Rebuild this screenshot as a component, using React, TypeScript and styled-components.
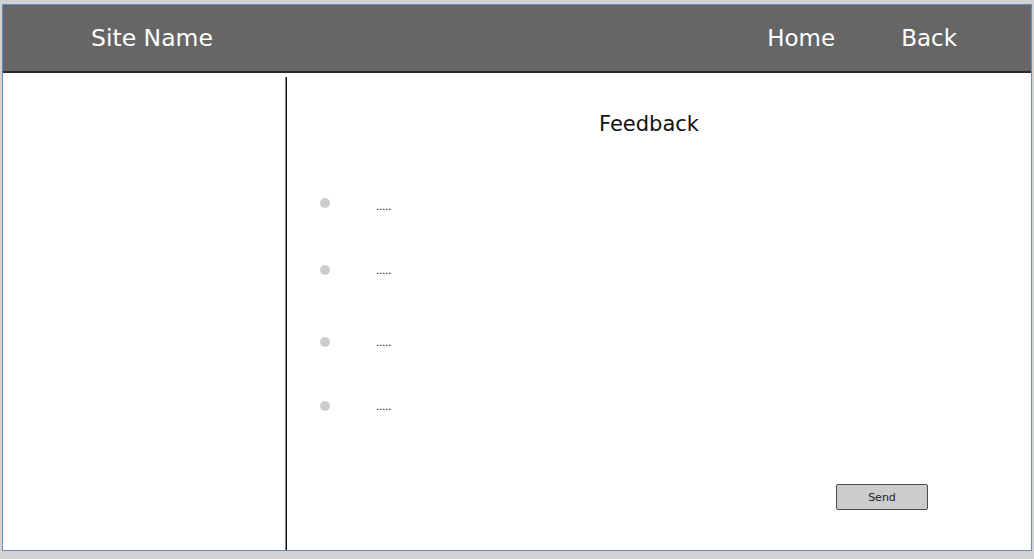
import React from "react";
import styled, { createGlobalStyle } from "styled-components";

const Global = createGlobalStyle`
  html, body { margin: 0; padding: 0; }
  body {
    background: #d2d2d2;
    font-family: "Comic Sans MS", "DejaVu Sans", sans-serif;
    width: 1034px;
    height: 559px;
    overflow: hidden;
  }
`;

const Frame = styled.div`
  margin: 4px 0 0 2px;
  width: 1030px;
  height: 547px;
  box-sizing: border-box;
  border: 1px solid #5f8fc6;
  background: #ffffff;
  display: flex;
  flex-direction: column;
`;

const Header = styled.header`
  height: 66px;
  flex: none;
  background: #666666;
  border-bottom: 2px solid #2a2a2a;
  display: flex;
  align-items: center;
  padding: 0 74px 0 88px;
  color: #ffffff;
`;

const SiteName = styled.div`
  font-size: 23.5px;
  flex: 1;
`;

const NavLink = styled.a<{ $gap: number }>`
  font-size: 23px;
  color: #ffffff;
  text-decoration: none;
  margin-left: ${(p) => p.$gap}px;
`;

const Body = styled.div`
  flex: 1;
  display: flex;
  min-height: 0;
`;

const Sidebar = styled.aside`
  width: 282px;
  flex: none;
`;

const Divider = styled.div`
  width: 1px;
  margin-top: 4px;
  flex: none;
  background: #111;
  border-left: 1px solid #888;
`;

const Main = styled.main`
  flex: 1;
  display: flex;
  flex-direction: column;
  padding: 37px 103px 40px 33px;
`;

const Title = styled.h1`
  margin: 1px 0 0 50px;
  font-weight: normal;
  font-size: 21px;
  line-height: 26px;
  text-align: center;
  color: #111;
`;

const Row = styled.div<{ $top: number }>`
  display: flex;
  align-items: center;
  height: 20px;
  margin-top: ${(p) => p.$top}px;
`;

const Bullet = styled.span`
  width: 10px;
  height: 10px;
  border-radius: 50%;
  background: #cccccc;
  flex: none;
`;

const ItemText = styled.span<{ $drop: number }>`
  margin-left: 46px;
  padding-top: ${(p) => p.$drop}px;
  font-size: 11px;
  color: #222;
  letter-spacing: -0.5px;
`;

const Footer = styled.div`
  margin-top: auto;
  display: flex;
  justify-content: flex-end;
`;

const SendButton = styled.button`
  width: 92px;
  height: 26px;
  background: #cccccc;
  border: 1px solid #4a4a4a;
  border-radius: 2px;
  font-family: inherit;
  font-size: 11px;
  color: #222;
  padding: 0;
`;

const items = [
  { top: 56, drop: 6 },
  { top: 47, drop: -2 },
  { top: 52, drop: -2 },
  { top: 44, drop: -2 },
];

export default function App() {
  return (
    <>
      <Global />
      <Frame>
        <Header>
          <SiteName>Site Name</SiteName>
          <NavLink href="#" $gap={0}>Home</NavLink>
          <NavLink href="#" $gap={66}>Back</NavLink>
        </Header>
        <Body>
          <Sidebar />
          <Divider />
          <Main>
            <Title>Feedback</Title>
            {items.map((it, i) => (
              <Row key={i} $top={it.top}>
                <Bullet />
                <ItemText $drop={it.drop}>.....</ItemText>
              </Row>
            ))}
            <Footer>
              <SendButton>Send</SendButton>
            </Footer>
          </Main>
        </Body>
      </Frame>
    </>
  );
}
